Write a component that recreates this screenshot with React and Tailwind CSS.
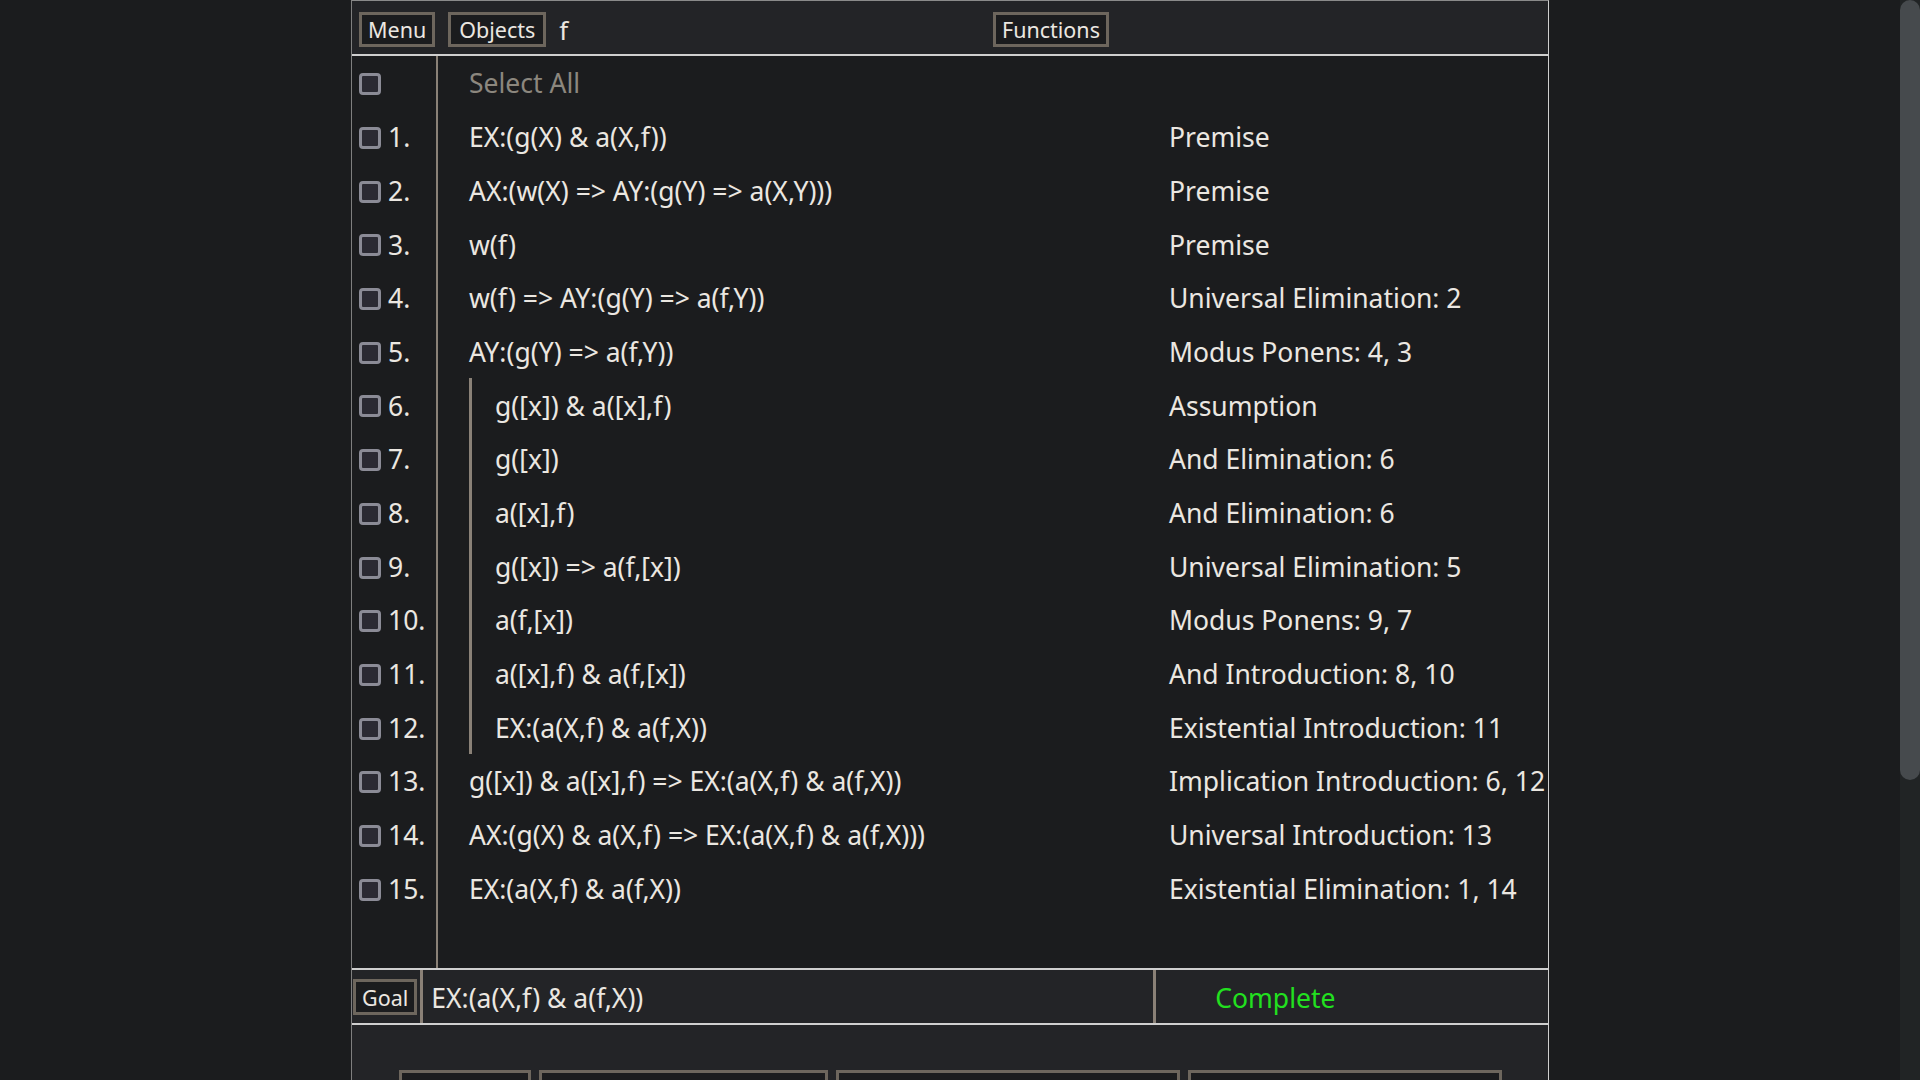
import { useState } from "react";

const LINES = [
  { n: 1, f: "EX:(g(X) & a(X,f))", j: "Premise" },
  { n: 2, f: "AX:(w(X) => AY:(g(Y) => a(X,Y)))", j: "Premise" },
  { n: 3, f: "w(f)", j: "Premise" },
  { n: 4, f: "w(f) => AY:(g(Y) => a(f,Y))", j: "Universal Elimination: 2" },
  { n: 5, f: "AY:(g(Y) => a(f,Y))", j: "Modus Ponens: 4, 3" },
  { n: 6, f: "g([x]) & a([x],f)", j: "Assumption", depth: 1 },
  { n: 7, f: "g([x])", j: "And Elimination: 6", depth: 1 },
  { n: 8, f: "a([x],f)", j: "And Elimination: 6", depth: 1 },
  { n: 9, f: "g([x]) => a(f,[x])", j: "Universal Elimination: 5", depth: 1 },
  { n: 10, f: "a(f,[x])", j: "Modus Ponens: 9, 7", depth: 1 },
  { n: 11, f: "a([x],f) & a(f,[x])", j: "And Introduction: 8, 10", depth: 1 },
  { n: 12, f: "EX:(a(X,f) & a(f,X))", j: "Existential Introduction: 11", depth: 1 },
  { n: 13, f: "g([x]) & a([x],f) => EX:(a(X,f) & a(f,X))", j: "Implication Introduction: 6, 12" },
  { n: 14, f: "AX:(g(X) & a(X,f) => EX:(a(X,f) & a(f,X)))", j: "Universal Introduction: 13" },
  { n: 15, f: "EX:(a(X,f) & a(f,X))", j: "Existential Elimination: 1, 14" },
];

const BOTTOM_BUTTONS = [
  { label: "rename", w: "w-[132px]" },
  { label: "substitute", w: "w-[289px]" },
  { label: "end subproof", w: "w-[344px]" },
  { label: "check answer", w: "w-[314px]" },
];

function Checkbox({ checked, onChange }) {
  return (
    <button
      onClick={onChange}
      className={`h-[22px] w-[22px] shrink-0 rounded-[4px] border-[3px] border-[#8b8b96] ${
        checked ? "bg-[#5a6cf0]" : "bg-[#2b2a33]"
      }`}
    />
  );
}

function HeaderButton({ children, className = "px-[6px]" }) {
  return (
    <button
      className={`h-[35px] border-[3px] border-[#6d665d] bg-[#1b1c1e] text-[21.5px] leading-none text-[#ebe7e1] ${className}`}
    >
      {children}
    </button>
  );
}

export default function App() {
  const [selected, setSelected] = useState({});

  const toggle = (n) => setSelected((s) => ({ ...s, [n]: !s[n] }));
  const allChecked = LINES.every((l) => selected[l.n]);
  const toggleAll = () => {
    const next = {};
    LINES.forEach((l) => (next[l.n] = !allChecked));
    setSelected(next);
  };

  return (
    <div
      className="flex h-screen overflow-hidden bg-[#1b1c1e] text-[#ebe7e1]"
      style={{ fontFamily: '"Noto Sans", "Open Sans", sans-serif' }}
    >
      <div className="flex-1 overflow-hidden">
        <div className="mx-auto flex min-h-[1495px] w-[1198px] flex-col border-t border-r border-l border-t-[#8a8a8a] border-r-[#cfcfcf] border-l-[#7f7f7f]">
          {/* Top bar */}
          <div className="grid h-[55px] grid-cols-[634px_1fr] items-center border-b-2 border-[#cfcfcf] bg-[#232427] pt-[4px] pl-[7px]">
            <div className="flex items-center gap-[13px]">
              <HeaderButton className="px-[6px]">Menu</HeaderButton>
              <HeaderButton className="px-[8px]">Objects</HeaderButton>
              <span className="text-[26px] leading-none">f</span>
            </div>
            <div className="flex items-center">
              <HeaderButton>Functions</HeaderButton>
            </div>
          </div>

          {/* Proof lines */}
          <div className="flex flex-col text-[26.5px]">
            <div className="grid h-[53.7px] grid-cols-[86px_1fr]">
              <div className="flex items-center border-r-2 border-[#8a8177] pt-[3px] pl-[7px]">
                <Checkbox checked={allChecked} onChange={toggleAll} />
              </div>
              <div className="flex items-center pt-[3px] pl-[31px] text-[#8c877e]">Select All</div>
            </div>

            {LINES.map((line) => (
              <div key={line.n} className="grid h-[53.7px] grid-cols-[86px_1fr]">
                <div className="flex items-center gap-[7px] border-r-2 border-[#8a8177] pt-[3px] pl-[7px]">
                  <Checkbox checked={!!selected[line.n]} onChange={() => toggle(line.n)} />
                  <span>{line.n}.</span>
                </div>
                <div className="grid grid-cols-[731px_1fr]">
                  {line.depth ? (
                    <div className="ml-[31px] flex items-center border-l-[3px] border-[#8a8177] pt-[3px] pl-[23px] whitespace-nowrap">
                      {line.f}
                    </div>
                  ) : (
                    <div className="flex items-center pt-[3px] pl-[31px] whitespace-nowrap">{line.f}</div>
                  )}
                  <div className="flex items-center pt-[3px] whitespace-nowrap">{line.j}</div>
                </div>
              </div>
            ))}

            <div className="grid h-[52.8px] grid-cols-[86px_1fr]">
              <div className="border-r-2 border-[#8a8177]" />
              <div />
            </div>
          </div>

          {/* Goal row */}
          <div className="flex h-[57px] items-stretch border-y-2 border-[#cfcfcf] bg-[#232427]">
            <div className="flex items-center pt-[2px] pl-px pr-[3px]">
              <button className="h-[36px] border-[3px] border-[#6d665d] bg-[#1b1c1e] px-[6px] text-[21.5px] leading-none">
                Goal
              </button>
            </div>
            <div className="flex w-[733px] items-center border-l-[3px] border-[#8a8177] pt-[5px] pl-[8px] text-[26.5px]">
              EX:(a(X,f) &amp; a(f,X))
            </div>
            <div className="flex flex-1 items-center border-l-[3px] border-[#8a8177] pt-[5px] pl-[59px] text-[26.5px] text-[#22e01f]">
              Complete
            </div>
          </div>

          {/* Bottom controls */}
          <div className="flex flex-1 justify-center gap-[8px] bg-[#232427] pt-[45px]">
            {BOTTOM_BUTTONS.map((b) => (
              <button
                key={b.label}
                className={`h-[52px] ${b.w} border-[3px] border-[#6d665d] bg-[#1b1c1e] pt-[4px] text-[24px] text-[#ebe7e1]`}
              >
                {b.label}
              </button>
            ))}
          </div>
        </div>
      </div>

      {/* Page scrollbar */}
      <div className="w-5 shrink-0 bg-[#212425]">
        <div className="h-[780px] rounded-full bg-[#464a4d]" />
      </div>
    </div>
  );
}
